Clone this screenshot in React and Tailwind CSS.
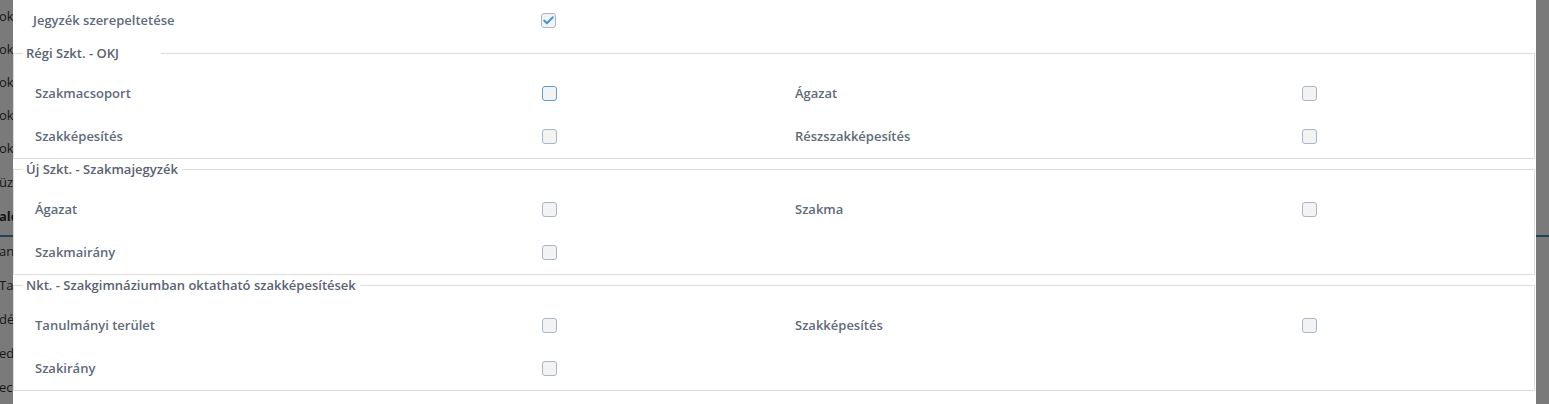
import { Check } from 'lucide-react'

const bgLines = [
  { t: 'ok', h: 33 },
  { t: 'ok', h: 33 },
  { t: 'ok', h: 33 },
  { t: 'ok', h: 33 },
  { t: 'ok', h: 34 },
  { t: 'üz', h: 34 },
  { t: 'ald', h: 34, bold: true },
  { t: 'an', h: 35 },
  { t: 'Ta', h: 34 },
  { t: 'dé', h: 34 },
  { t: 'ed', h: 34 },
  { t: 'ec', h: 34 },
]

const sections = [
  {
    legend: 'Régi Szkt. - OKJ',
    wide: true,
    rows: [
      ['Szakmacsoport', 'Ágazat'],
      ['Szakképesítés', 'Részszakképesítés'],
    ],
  },
  {
    legend: 'Új Szkt. - Szakmajegyzék',
    rows: [
      ['Ágazat', 'Szakma'],
      ['Szakmairány', null],
    ],
  },
  {
    legend: 'Nkt. - Szakgimnáziumban oktatható szakképesítések',
    rows: [
      ['Tanulmányi terület', 'Szakképesítés'],
      ['Szakirány', null],
    ],
  },
]

const Box = ({ checked, focus }) => (
  <span
    className={`flex h-[15px] w-[15px] items-center justify-center rounded-[3px] border bg-[#f3f3f3] ${
      focus ? 'border-[#5d9dd2]' : 'border-[#aab6c3]'
    }`}
  >
    {checked && <Check className="h-[13px] w-[13px] text-[#3f95d8]" strokeWidth={3.5} />}
  </span>
)

const Field = ({ label, checked, focus }) => (
  <div className="flex h-[43px] items-center">
    <span className="w-[528px] pl-[21px] text-[13px] font-semibold text-[#5f6b79]">{label}</span>
    <Box checked={checked} focus={focus} />
  </div>
)

export default function App() {
  return (
    <div className="relative h-[404px] w-[1549px] overflow-hidden bg-white" style={{ fontFamily: '"Open Sans", "Liberation Sans", sans-serif' }}>
      {/* page behind the dialog */}
      <div className="flex flex-col text-[13px] text-[#333]">
        {bgLines.map((l, i) => (
          <div key={i} className="relative flex items-center" style={{ height: l.h }}>
            <span className={`-ml-[1px] ${l.bold ? 'font-bold' : ''}`}>{l.t}</span>
            {i === 6 && <div className="absolute left-0 top-[35px] h-[2px] w-[1549px] bg-[#3c8dbc]" />}
          </div>
        ))}
      </div>

      {/* backdrop */}
      <div className="absolute inset-0 bg-black/[0.52]" />

      {/* dialog */}
      <div className="absolute bottom-0 left-[13px] top-0 w-[1523px] bg-white pr-px">
        <div className="flex h-[41px] items-center">
          <span className="w-[528px] pl-[20px] text-[13px] font-semibold text-[#5f6b79]">Jegyzék szerepeltetése</span>
          <Box checked />
        </div>

        <div className="mt-[3px] flex flex-col gap-px">
          {sections.map((s, si) => (
            <fieldset key={si} className="border border-[#dcdcdc]">
              <legend
                className={`ml-[9px] pl-[3px] text-[13px] font-semibold leading-[18px] text-[#5a6370] ${
                  s.wide ? 'pr-[42px]' : 'pr-[4px]'
                }`}
              >
                {s.legend}
              </legend>
              <div className="mt-[10px]">
                {s.rows.map((r, ri) => (
                  <div key={ri} className="grid grid-cols-[760px_760px]">
                    <Field label={r[0]} focus={si === 0 && ri === 0} />
                    {r[1] ? <Field label={r[1]} /> : <div />}
                  </div>
                ))}
              </div>
            </fieldset>
          ))}
        </div>
      </div>
    </div>
  )
}
